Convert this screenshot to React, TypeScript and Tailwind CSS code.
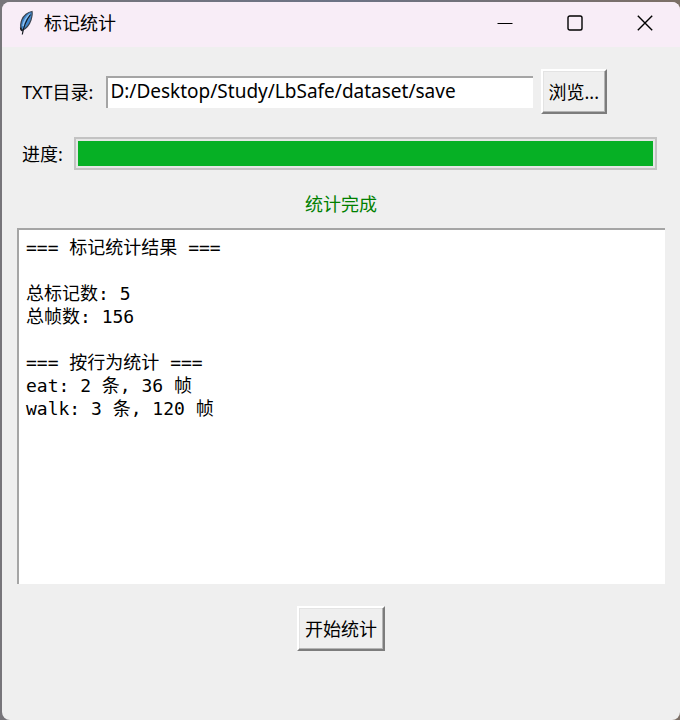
import { useState } from "react";

const report = `=== 标记统计结果 ===

总标记数: 5
总帧数: 156

=== 按行为统计 ===
eat: 2 条, 36 帧
walk: 3 条, 120 帧`;

const FeatherIcon = () => (
  <svg width="16" height="26" viewBox="0 0 16 26" aria-hidden="true">
    <path
      d="M14 1.500C10 2 5.500 5.500 3.800 10c-1.200 3.200-1.600 6-.6 9l1.400 1.200C8 18.500 11.500 14.500 13 10c.9-3 1.600-6 1-8.500Z"
      fill="#3f86cc"
      stroke="#3b4450"
      strokeWidth="1.200"
    />
    <path d="M12 4C8.500 7 6 11 5 16" stroke="#8fc0ee" strokeWidth="1.600" fill="none" />
    <path d="M12.500 4.500C9 9 6 14 4.300 24.500" stroke="#151a20" strokeWidth="1.200" fill="none" />
    <path d="M2.600 17.500c0 1.800.8 3 2 3.200" stroke="#151a20" strokeWidth="1.400" fill="none" />
  </svg>
);

const TitleBar = () => (
  <header className="flex h-[45px] items-center bg-[#f8edf7] pb-[3px] pl-4">
    <FeatherIcon />
    <h1 className="ml-[10px] flex-1 text-[18px] leading-6">标记统计</h1>
    <button type="button" aria-label="最小化" className="flex h-full w-[70px] items-center justify-center">
      <svg width="16" height="16" viewBox="0 0 16 16" stroke="#000" fill="none">
        <path d="M0.500 8.500h15" />
      </svg>
    </button>
    <button type="button" aria-label="最大化" className="flex h-full w-[70px] items-center justify-center">
      <svg width="16" height="16" viewBox="0 0 16 16" stroke="#000" strokeWidth="1.400" fill="none">
        <rect x="1" y="1" width="14" height="14" rx="1.800" />
      </svg>
    </button>
    <button type="button" aria-label="关闭" className="flex h-full w-[70px] items-center justify-center">
      <svg width="16" height="16" viewBox="0 0 16 16" stroke="#000" strokeWidth="1.400" fill="none">
        <path d="M0.800 0.800l14.400 14.400M15.200 0.800L0.800 15.200" />
      </svg>
    </button>
  </header>
);

// Raised button with the classic Tk bevel
const TkButton = ({ children }: { children: string }) => (
  <button
    type="button"
    className="h-[45px] shrink-0 border-2 border-t-white border-r-[#7c7c7c] border-b-[#7c7c7c] border-l-white bg-[#efefef] px-[6px] text-[18px] leading-6 whitespace-nowrap shadow-[inset_-1px_-1px_0_#b4b4b4,inset_1px_1px_0_#e3e3e3]"
  >
    {children}
  </button>
);

export default function App() {
  const [dir, setDir] = useState("D:/Desktop/Study/LbSafe/dataset/save");
  const progress = 100;

  return (
    <div className="flex min-h-screen flex-col bg-linear-to-r from-[#77757a] via-[#6c7385] to-[#7c6f66] pt-[2px] pl-[2px] font-['Noto_Sans','Noto_Sans_CJK_SC',sans-serif] text-black">
      <div className="flex flex-1 flex-col overflow-hidden rounded-lg bg-[#efefef]">
        <TitleBar />
        <main className="flex flex-1 flex-col">
          <div className="mt-[22px] flex items-center pr-[73px] pl-5">
            <label htmlFor="dir" className="shrink-0 text-[18px] leading-6">
              TXT目录:
            </label>
            <input
              id="dir"
              type="text"
              value={dir}
              onChange={(e) => setDir(e.target.value)}
              className="ml-[13px] h-8 min-w-0 flex-1 border-t-2 border-l-2 border-[#a5a5a5] bg-white px-[2px] pb-1 text-[19px] leading-6 outline-none"
            />
            <div className="ml-2 flex">
              <TkButton>浏览...</TkButton>
            </div>
          </div>

          <div className="mt-[23px] flex items-center pr-[23px] pl-5">
            <span id="progress-label" className="shrink-0 text-[18px] leading-6">
              进度:
            </span>
            <div
              role="progressbar"
              aria-labelledby="progress-label"
              aria-valuenow={progress}
              className="ml-[11px] h-[33px] flex-1 border-2 border-[#c3c3c3] bg-[#e6e6e6] p-[2px]"
            >
              <div className="h-full bg-[#06b025]" style={{ width: `${progress}%` }} />
            </div>
          </div>

          <p role="status" className="mt-[22px] text-center text-[18px] leading-6 text-[#008000]">
            统计完成
          </p>

          <textarea
            readOnly
            aria-label="标记统计结果"
            value={report}
            className="mx-[15px] mt-3 h-[356px] resize-none border-t-2 border-l-2 border-[#a5a5a5] bg-white px-[7px] py-[6px] font-['DejaVu_Sans_Mono','Noto_Sans_CJK_SC',monospace] text-[18px] leading-[23px] outline-none"
          />

          <div className="mt-[22px] flex justify-center">
            <TkButton>开始统计</TkButton>
          </div>
        </main>
      </div>
    </div>
  );
}
